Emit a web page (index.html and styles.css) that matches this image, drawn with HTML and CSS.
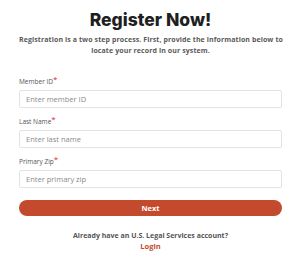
FILE: index.html
```html
<!DOCTYPE html>
<html>
<head>
<meta charset="utf-8">
<link rel="stylesheet" href="styles.css">
</head>
<body>
<main class="page">
  <h1 class="title">Register Now!</h1>
  <p class="intro">Registration is a two step process. First, provide the information below to<br>locate your record in our system.</p>
  <form class="form">
    <div class="field">
      <label class="label">Member ID<span class="req">*</span></label>
      <input class="input" type="text" placeholder="Enter member ID">
    </div>
    <div class="field">
      <label class="label">Last Name<span class="req">*</span></label>
      <input class="input" type="text" placeholder="Enter last name">
    </div>
    <div class="field">
      <label class="label">Primary Zip<span class="req">*</span></label>
      <input class="input" type="text" placeholder="Enter primary zip">
    </div>
    <button class="btn" type="button">Next</button>
  </form>
  <div class="footer">
    <p class="already">Already have an U.S. Legal Services account?</p>
    <a class="login" href="#">Login</a>
  </div>
</main>
</body>
</html>
```
FILE: styles.css
```css
* { box-sizing: border-box; }
html, body { margin: 0; padding: 0; background: #fff; }
body { font-family: "Open Sans", "Liberation Sans", sans-serif; color: #333; }
.page { padding: 8px 20px 0 19px; display: flex; flex-direction: column; }
.title { margin: 0; text-align: center; font-family: Inter, "Open Sans", sans-serif; font-weight: 800; font-size: 17.5px; line-height: 24px; color: #1f1f1f; }
.intro { margin: 2px 0 0; text-align: center; font-size: 7px; letter-spacing: 0.1px; line-height: 11px; font-weight: 700; color: #5a5a5a; white-space: nowrap; }
.form { margin-top: 20px; display: flex; flex-direction: column; }
.field { display: flex; flex-direction: column; margin-bottom: 8px; }
.label { font-size: 6.5px; line-height: 9px; color: #555; margin-bottom: 4px; }
.req { color: #e0262d; font-size: 8px; position: relative; top: -2px; }
.input { height: 18px; border: 1px solid #e3e3e3; border-radius: 2px; padding: 0 6px; font-family: inherit; font-size: 7.5px; color: #333; background: #fff; outline: none; }
.input::placeholder { color: #8a8a8a; }
.btn { margin-top: 4px; height: 16px; border: none; border-radius: 8px; background: #c44a2e; color: #fff; font-family: inherit; font-weight: 700; font-size: 7.5px; padding: 0; }
.footer { margin-top: 14px; display: flex; flex-direction: column; align-items: center; }
.already { margin: 0; font-size: 7px; line-height: 11px; font-weight: 700; color: #555; }
.login { font-size: 7.5px; line-height: 11px; font-weight: 700; color: #c44a2e; text-decoration: none; }
```
